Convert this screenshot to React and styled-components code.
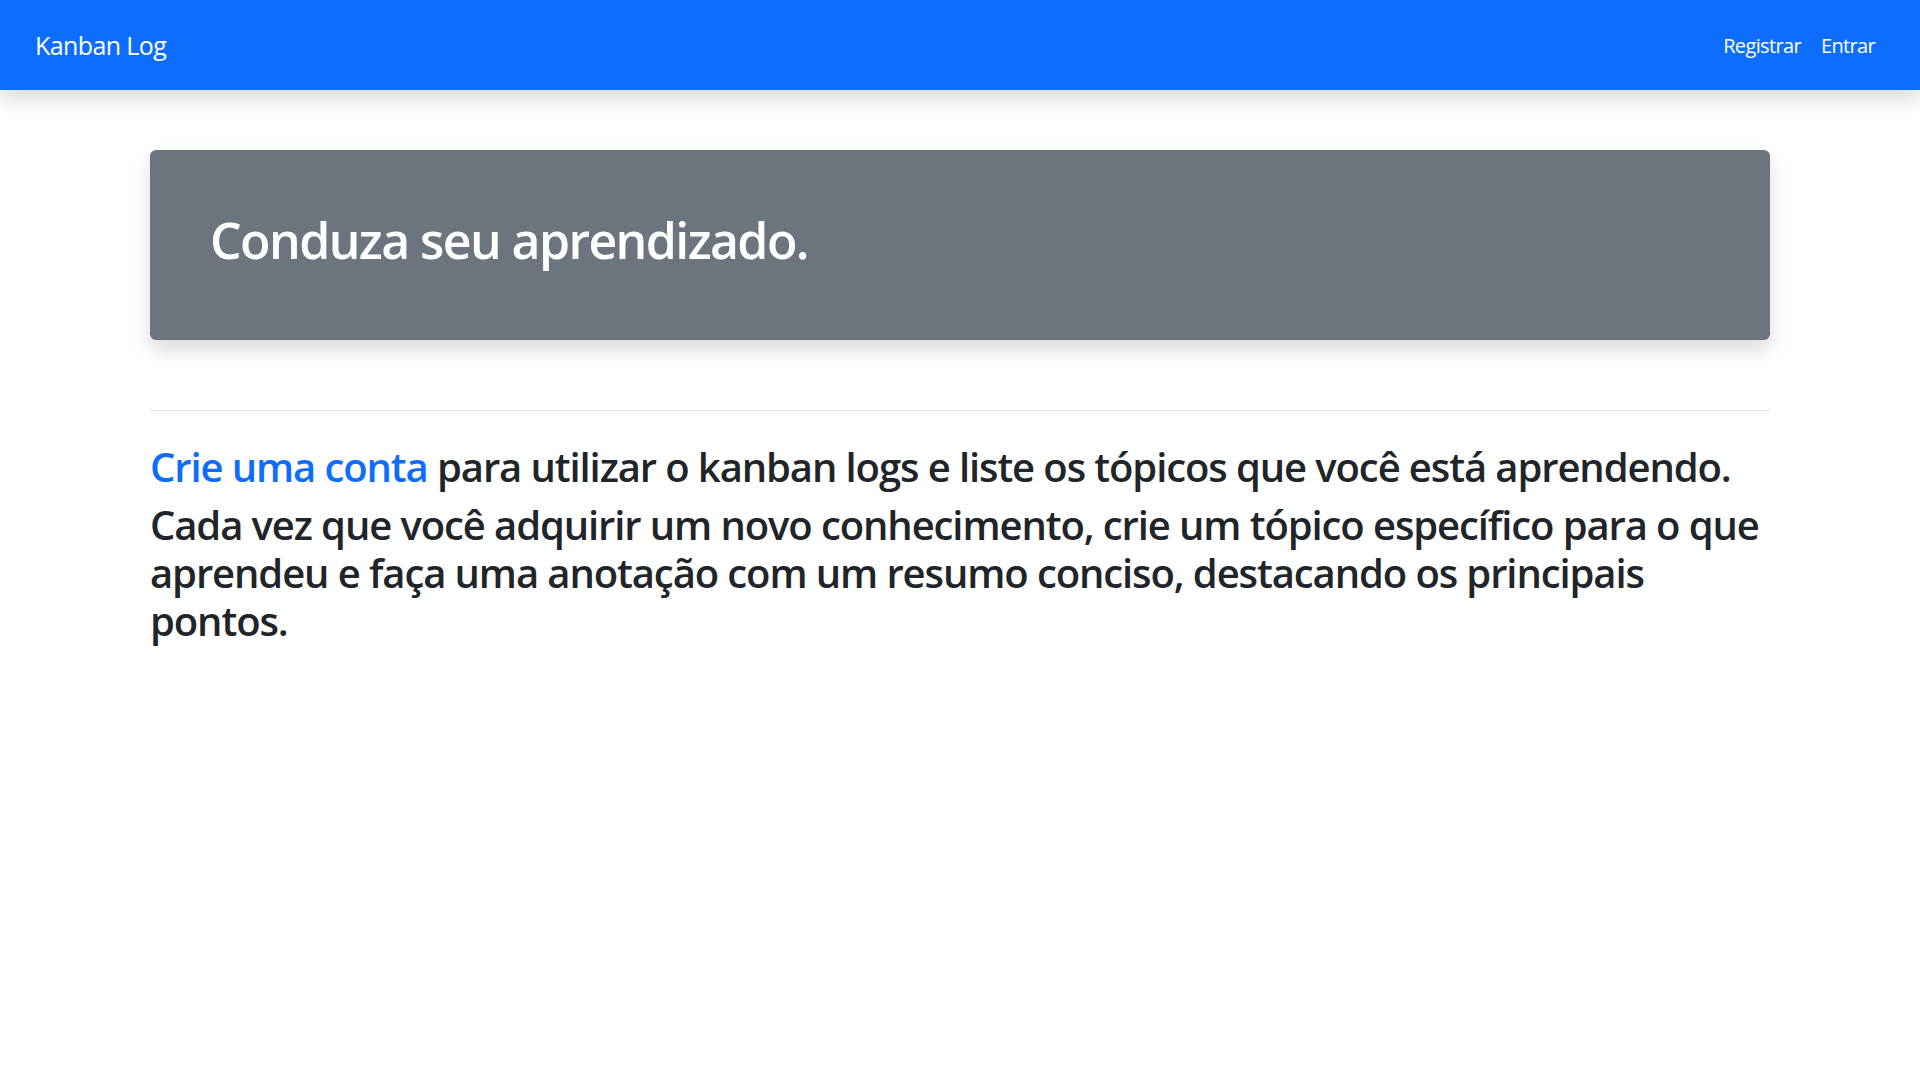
import React from "react";
import styled, { createGlobalStyle } from "styled-components";

const GlobalStyle = createGlobalStyle`
  *, *::before, *::after {
    box-sizing: border-box;
  }

  body {
    margin: 0;
    font-family: "Open Sans", "Noto Sans", sans-serif;
    color: #212529;
    background: #fff;
  }
`;

const Navbar = styled.nav`
  position: relative;
  z-index: 1;
  display: flex;
  align-items: center;
  justify-content: space-between;
  height: 90px;
  padding: 0 35px;
  background-color: #0d6efd;
  box-shadow: 0 10px 20px rgba(0, 0, 0, 0.15);
`;

const Brand = styled.a`
  font-size: 25px;
  letter-spacing: -0.6px;
  color: #fff;
  text-decoration: none;
`;

const NavLinks = styled.div`
  display: flex;
  align-items: center;
`;

const NavLink = styled.a`
  padding: 10px;
  font-size: 20px;
  letter-spacing: -0.65px;
  color: #fff;
  text-decoration: none;
`;

const Container = styled.main`
  width: 1620px;
  margin: 0 auto;
  padding-top: 60px;
`;

const Jumbotron = styled.section`
  padding: 60px;
  background-color: #6c757d;
  border-radius: 6px;
  box-shadow: 0 10px 20px rgba(0, 0, 0, 0.15);
`;

const Headline = styled.h1`
  margin: 0 0 10px;
  font-size: 50px;
  font-weight: 600;
  line-height: 1.2;
  letter-spacing: -1.6px;
  color: #fff;
`;

const Divider = styled.hr`
  margin: 70px 0 32px;
  border: 0;
  border-top: 1px solid #dee2e6;
`;

const Lead = styled.h2`
  margin: 0 0 10px;
  font-size: 40px;
  font-weight: 600;
  line-height: 1.2;
  letter-spacing: -1.1px;
`;

const TextLink = styled.a`
  color: #0d6efd;
  text-decoration: none;
`;

export default function App() {
  return (
    <>
      <GlobalStyle />
      <Navbar>
        <Brand href="#">Kanban Log</Brand>
        <NavLinks>
          <NavLink href="#">Registrar</NavLink>
          <NavLink href="#">Entrar</NavLink>
        </NavLinks>
      </Navbar>
      <Container>
        <Jumbotron>
          <Headline>Conduza seu aprendizado.</Headline>
        </Jumbotron>
        <Divider />
        <Lead>
          <TextLink href="#">Crie uma conta</TextLink> para utilizar o kanban logs e liste os tópicos
          que você está aprendendo.
        </Lead>
        <Lead>
          Cada vez que você adquirir um novo conhecimento, crie um tópico específico para o que
          aprendeu e faça uma anotação com um resumo conciso, destacando os principais pontos.
        </Lead>
      </Container>
    </>
  );
}
